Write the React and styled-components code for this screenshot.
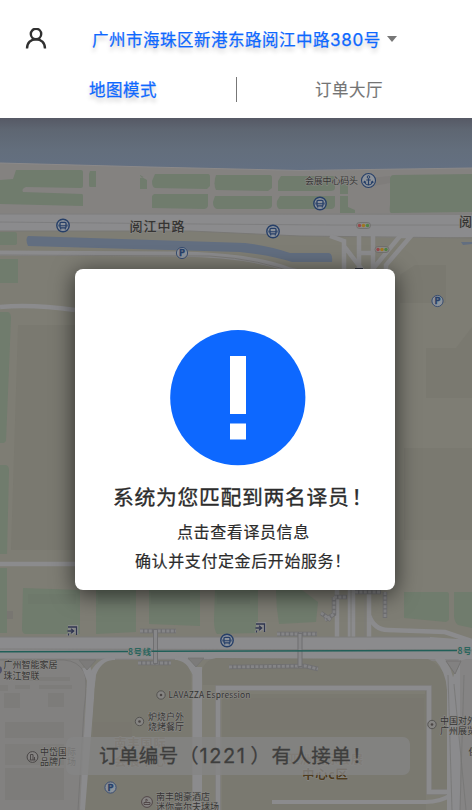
import React from "react";
import styled, { createGlobalStyle } from "styled-components";

const Global = createGlobalStyle`
  * { box-sizing: border-box; }
  body { margin: 0; background: #7e7d74; font-family: "Noto Sans CJK SC", "Noto Sans", sans-serif; }
`;

const Screen = styled.div`
  display: flex;
  flex-direction: column;
  width: 472px;
  height: 810px;
  overflow: hidden;
`;

const Header = styled.header`
  height: 118px;
  flex: none;
  background: #fff;
  display: flex;
  flex-direction: column;
`;

const AddressBar = styled.div`
  display: flex;
  align-items: center;
  height: 50px;
  margin-top: 14px;
  padding-left: 25px;
`;

const Address = styled.div`
  display: flex;
  align-items: center;
  margin-left: 45px;
  color: #0d68ff;
  font-size: 16.5px;
  line-height: 24px;
  letter-spacing: 0.5px;
  white-space: nowrap;
  -webkit-text-stroke: 0.25px currentColor;
  text-shadow: 0 4px 4px rgba(0, 0, 0, 0.22);
`;

const Digits = styled.span`
  font-family: Inter, "Liberation Sans", sans-serif;
  font-size: ${(p) => p.$size}px;
  letter-spacing: ${(p) => p.$gap}px;
`;

const Mark = styled.span`
  margin-left: ${(p) => p.$before || 0}px;
  margin-right: ${(p) => p.$after || 0}px;
`;

const Caret = styled.span`
  margin-left: 6px;
  border: 5px solid transparent;
  border-top: 6px solid #777;
  border-bottom: 0;
`;

const Tabs = styled.nav`
  display: grid;
  grid-template-columns: 236px 1px 1fr;
  align-items: center;
  height: 50px;
`;

const Tab = styled.span`
  justify-self: center;
  margin-left: ${(p) => p.$shift}px;
  font-size: 16.5px;
  line-height: 24px;
  letter-spacing: 0.5px;
  color: ${(p) => (p.$active ? "#0d68ff" : "#747474")};
  -webkit-text-stroke: ${(p) => (p.$active ? "0.25px" : "0.15px")} currentColor;
  text-shadow: ${(p) => (p.$active ? "0 4px 4px rgba(0, 0, 0, 0.22)" : "none")};
`;

const Divider = styled.span`
  height: 25px;
  background: #777;
`;

const Stage = styled.main`
  flex: 1;
  display: grid;
  grid-template: 692px / 472px;
  > * { grid-area: 1 / 1; }
`;

const MapSvg = styled.svg`
  display: block;
  width: 472px;
  height: 692px;
  font-family: "Noto Sans CJK SC", "Noto Sans", sans-serif;
`;

const Dialog = styled.section`
  z-index: 2;
  width: 320px;
  height: 321px;
  margin: 151px 0 0 75px;
  padding-top: 61px;
  border-radius: 8px;
  background: #fff;
  box-shadow: 0 4px 22px 1px rgba(0, 0, 0, 0.6);
  display: flex;
  flex-direction: column;
  color: #2c2c2c;
  white-space: nowrap;
`;

const AlertIcon = styled.svg`
  width: 136px;
  height: 136px;
  flex: none;
  margin-left: 95px;
`;

const Title = styled.h1`
  margin: 14px 0 0 38px;
  font-size: 20.8px;
  font-weight: 400;
  line-height: 32px;
  letter-spacing: 0.7px;
  -webkit-text-stroke: 0.35px currentColor;
`;

const Line = styled.p`
  margin: ${(p) => p.$top}px 0 0 ${(p) => p.$left}px;
  font-size: 16px;
  line-height: 24px;
  letter-spacing: 0.6px;
  -webkit-text-stroke: 0.2px currentColor;
`;

const Toast = styled.div`
  z-index: 1;
  width: 344px;
  height: 38px;
  margin: 619px 0 0 66px;
  padding-left: 33px;
  border-radius: 7px;
  background: rgba(133, 133, 132, 0.8);
  color: #3e3e3d;
  font-size: 19.5px;
  line-height: 36px;
  letter-spacing: 0.4px;
  white-space: nowrap;
  -webkit-text-stroke: 0.3px currentColor;
`;

const GREEN = "#707c6d";
const ROAD = "#8b8b8d";
const BLUE = "#263f68";

const Bus = ({ x, y }) => (
  <g transform={`translate(${x} ${y})`} fill="none" stroke={BLUE}>
    <circle r="6.2" fill="#8c929b" strokeWidth="1.4" />
    <rect x="-3" y="-3.2" width="6" height="5.6" rx="1" strokeWidth="1.3" />
    <path d="M-3 .3H3M-2.3 2.5V4M2.3 2.5V4M-4-1V1M4-1V1" strokeWidth="1.1" />
  </g>
);

const Parking = ({ x, y }) => (
  <g transform={`translate(${x} ${y})`}>
    <circle r="5.6" fill="#8c929b" stroke="#3a4e70" strokeWidth="1" />
    <text y="3.3" textAnchor="middle" fontSize="9" fontWeight="700" fill={BLUE} stroke={BLUE} strokeWidth=".4">P</text>
  </g>
);

const Signal = ({ x, y }) => (
  <g transform={`translate(${x} ${y})`}>
    <rect x="-7" y="-3" width="14" height="6" rx="3" fill="#8a8986" stroke="#686767" strokeWidth=".7" />
    <circle cx="-4" r="1.7" fill="#97494b" />
    <circle r="1.7" fill="#a07722" />
    <circle cx="4" r="1.7" fill="#4f8145" />
  </g>
);

const Exit = ({ x, y }) => (
  <g transform={`translate(${x} ${y})`} fill="none">
    <path d="M-4-3.5H4.5V4M-4 .5H1.5M-1-2L1.7.5L-1 3M-3.5 3V5" stroke="#8d8d8e" strokeWidth="3.4" />
    <path d="M-4-3.5H4.5V4.5M-4.5 .5H1.5M-1-1.7L1.7.5L-1 2.7M-3.5 3V5" stroke="#303650" strokeWidth="1.3" />
  </g>
);

const Spot = ({ x, y }) => (
  <g transform={`translate(${x} ${y})`}>
    <circle r="4.2" fill="#858482" stroke="#555452" strokeWidth="1" />
    <circle r="1.3" fill="#4b4645" />
  </g>
);

const Bridge = ({ d }) => (
  <g fill="none">
    <path d={d} stroke="#6f6f71" strokeWidth="4.4" />
    <path d={d} stroke="#858587" strokeWidth="2.8" strokeDasharray="3 1.4" />
  </g>
);

const Label = ({ x, y, size = 9, w, weight = 400, fill = "#363534", children }) => (
  <text x={x} y={y} fontSize={size} fontWeight={weight} textLength={w} fill={fill} stroke="#898885" strokeWidth="1.2" strokeLinejoin="round" paintOrder="stroke">
    {children}
  </text>
);

const CityMap = () => (
  <MapSvg viewBox="0 118 472 692">
    <defs>
      <linearGradient id="water" x1="0" x2="0" y1="0" y2="1">
        <stop offset="0" stopColor="#565965" />
        <stop offset=".22" stopColor="#5e6672" />
        <stop offset=".6" stopColor="#636e7c" />
        <stop offset="1" stopColor="#647082" />
      </linearGradient>
    </defs>
    <rect y="118" width="472" height="692" fill="#7e7d74" />

    <path d="M0 160H472V216H0Z" fill="#848280" />
    <path d="M0 118H472V168Q350 170 300 170.500L150 167L0 163Z" fill="url(#water)" />
    <path d="M0 163L150 167L300 170.500L472 168" fill="none" stroke="#8b8989" />

    <g fill={GREEN}>
      <path d="M0 180L13 179L16 170H81Q83 170 83 172V186Q83 188 81 188L26 187Q21 189 23 192L82 194Q83 194 83 196V206L0 204Z" />
      <path d="M90 171H96V187H90Q89 187 89 185V174Z" />
      <path d="M140 175L147 179V189H140Z" />
      <path d="M155 174H208Q210 174 210 177V186L207 189L155 188Q152 187 152 181Z" />
      <path d="M154 194H208V206Q207 209 204 209L152 208V196Z" />
      <path d="M216 175H270Q272 175 272 178V188L268 191L216 190Q213 184 216 175Z" />
      <path d="M215 196H272V206Q271 209 267 209H217Q213 208 213 202Z" />
      <path d="M281 176H333Q335 176 335 179V188Q335 191 330 191H278V181Z" />
      <path d="M280 196H335V206Q334 209 331 209H279Q276 207 277 201Z" />
      <path d="M340 182H348V194H340ZM340 196H348V207L355 210V213H340Z" />
      <path d="M394 175L472 174V212L391 213Q389 212 390 205V179Q390 175 394 175Z" />
      <path d="M0 232H15Q17 232 17 235V243Q17 245 14 245H0ZM0 259H18V283H0Z" />
    </g>
    <path d="M140 178L147 176V180L140 176" fill="#858381" />
    <path d="M370 178L390 176V183L368 187Z" fill="#7f7d7b" />

    <path d="M0 214L472 215V237L430 238L300 236L190 231L0 231Z" fill={ROAD} />
    <path d="M0 214H472M0 222L200 224L330 225L472 225" fill="none" stroke="#7e7e7f" />
    <path d="M0 231L190 231L300 236L472 238" fill="none" stroke="#797875" />
    <path d="M28 236L245 243Q270 246 290 253L329 253Q333 254 332 262H292Q270 255 240 252L28 246Q25 239 28 236Z" fill="#626e80" />
    <path d="M461 242H472V244L463 245Z" fill="#626e80" />
    <path d="M0 253L180 254Q250 255 290 270L360 285" fill="none" stroke={ROAD} strokeWidth="5" />
    <path d="M0 255L210 256Q260 259 300 275" fill="none" stroke="#7c7b79" />
    <path d="M330 236L344 241V280M359 236V280M373 236V280M344 246L370 280M372 270L400 236H411L386 265V280M359 253H372" fill="none" stroke={ROAD} strokeWidth="4.500" />
    <path d="M355 268H363V272H355Z" fill="#2f333d" />
    <path d="M415 265H446V303H400V275Z" fill="#7a7970" />

    <path d="M18 325H75V550H11Z" fill="#7a7970" />
    <path d="M426 348H456L472 327V398H426Z" fill="#7a7970" />
    <path d="M404 448H472V540H404Z" fill="#7a7970" />
    <path d="M0 307Q32 304 75 310" fill="none" stroke={ROAD} strokeWidth="4.500" />
    <path d="M0 564H75" fill="none" stroke={ROAD} strokeWidth="4.500" />
    <g fill={GREEN}>
      <path d="M0 312H8Q11 313 11 318L6 441L4 443H0Z" />
      <path d="M0 465H6Q9 466 9 470L7 554H0ZM0 568H7V633H0Z" />
      <path d="M23 588L80 590L80 634H25Q22 633 22 629Z" />
      <path d="M96 588H136V632L96 634Z" />
      <path d="M149 588H200V626L149 624Z" />
      <path d="M215 588H258V633L217 634Q214 630 214 620Z" />
      <path d="M276 590H302L318 602L316 622L279 624Q276 607 276 590Z" />
      <path d="M404 592H447Q449 592 449 595V620L446 622L404 618Z" />
      <path d="M454 592H472V628L458 625Q454 622 454 615Z" />
    </g>
    <path d="M28 594H76V604H28ZM98 592H130V604H98ZM151 592H190V604H151ZM217 592H250V604H217Z" fill="#697568" opacity=".3" />
    <path d="M7 611H13V619H7Z" fill="#787671" />

    <path d="M337 590V638M350 590V638M353 590V638M369 590V638M369 615Q374 630 388 630L445 632L472 641" fill="none" stroke={ROAD} strokeWidth="4.500" />
    <path d="M351 590V637M365 592V637" fill="none" stroke="#7d7c79" />
    <path d="M0 637H430L472 640V661L0 659Z" fill={ROAD} />
    <path d="M0 637H430M0 649L472 650M0 659L472 660" fill="none" stroke="#7d7c7b" />
    <path d="M0 660H80L86 672L82 810H0Z" fill="#828180" />
    <path d="M0 660H64Q78 661 84 672Q88 680 84 710L78 810" fill="none" stroke="#777675" />
    <path d="M90 690L94 673Q101 660 115 660M196 810L196 674Q191 660 175 660" fill="none" stroke={ROAD} strokeWidth="7" />
    <path d="M86 667L91 680L84 810" fill="none" stroke={ROAD} strokeWidth="8" />
    <path d="M198 667V810" fill="none" stroke={ROAD} strokeWidth="8" />
    <path d="M96 675Q101 661 113 660H177Q191 663 191 678L192 790L185 810H85Z" fill="#7a7970" />
    <path d="M202 671Q204 660 216 658L428 659Q445 667 447 685V795H425V690H222L221 685H203Z" fill="#7a7970" />
    <path d="M79 660H96L87 670ZM188 658H204L196 667Z" fill="#7c7b7a" stroke="#747372" strokeWidth=".8" />
    <path d="M218 810V688H429V792H447" fill="none" stroke="#7c7b79" strokeWidth="6" />
    <path d="M218 810V688H429V792H447" fill="none" stroke={ROAD} strokeWidth="4.500" />
    <path d="M222 694H426V810H222Z" fill="#7a7970" />
    <path d="M272 802H426Q440 802 451 795" fill="none" stroke={ROAD} strokeWidth="4" />
    <path d="M438 657Q450 670 451 690V810M463 659L457 678V810" fill="none" stroke={ROAD} strokeWidth="8" />
    <path d="M460 660H472V810H460Z" fill="#858484" />
    <path d="M446 661H461L455 674Z" fill="#828181" stroke="#747372" />
    <path d="M448 675L452 810M464 675L460 810M454 684L466 810" fill="none" stroke="#767675" strokeWidth=".8" />
    <path d="M4 693H20V708H4ZM48 693H64V707H48ZM5 722H64V738H5ZM5 768H64V800H5ZM0 685H8V691H0ZM15 685H30V689H15ZM39 685H72V689H39ZM20 677H70V681H20Z" fill="#7d7c7a" />
    <path d="M5 744H64V765H5Z" fill="#7e7d7b" />
    <path d="M93 722H132V756H93ZM93 760H184V775H93ZM230 698H424V730H230Z" fill="#77756d" opacity=".4" />

    <Bridge d="M140 631H176M138 663H171M277 634H317" />
    <Bridge d="M229 667L305 666L318 669M334 597H347M334 597V614L325 620M321 613L331 620M355 592H381M385 592V618" />
    <path d="M155.500 629V664M300 633V667" stroke="#6f6f71" strokeWidth="5" />
    <path d="M155.500 630V663M300 634V666" stroke="#878789" strokeWidth="3" />
    <path d="M0 651.700L128 651.500M151 651.300L457 650.500" stroke="#205f58" strokeWidth="1.500" />
    <Label x={128} y={654.500} size={8.500} w={23} weight={700} fill="#2c6660">8号线</Label>
    <Label x={457.500} y={653.500} size={8.500} w={23} weight={700} fill="#2c6660">8号线</Label>

    <Bus x={63} y={225.500} />
    <Bus x={320} y={203.500} />
    <Bus x={273} y={231.500} />
    <Bus x={227} y={640.500} />
    <Parking x={182} y={253} />
    <Parking x={437.500} y={301} />
    <Parking x={110.500} y={787.500} />
    <Signal x={363.500} y={225.500} />
    <Signal x={382} y={249.500} />
    <Exit x={72} y={630.500} />
    <Exit x={260} y={627.500} />
    <g transform="translate(368.500 180.500)" fill="none" stroke={BLUE}>
      <circle r="7" fill="#8d9299" strokeWidth="1.100" />
      <circle cy="-3.500" r="1.300" />
      <path d="M0-2V4.500M-2.200-.5H2.200M-4 1Q-3.500 4 0 4.500Q3.500 4 4 1M-4.800 2.300L-4 .8L-2.500 2M4.800 2.300L4 .8L2.500 2" strokeWidth="1.200" />
    </g>

    <Label x={305} y={183.500} size={9} w={53}>会展中心码头</Label>
    <Label x={129.500} y={230.500} size={13} w={55} weight={500}>阅江中路</Label>
    <Label x={459} y={226} size={13} weight={500}>阅江</Label>
    <circle cx="-2" cy="670" r="4" fill="#505269" />
    <Label x={3.500} y={668} w={54}>广州智能家居</Label>
    <Label x={3.500} y={679} w={36}>珠江智联</Label>
    <Spot x={161} y={695} />
    <Label x={168.500} y={698} size={8.500} w={82}>LAVAZZA Espression</Label>
    <Spot x={139.500} y={721.500} />
    <Label x={148} y={720} w={36}>炉烧户外</Label>
    <Label x={148} y={730} w={36}>烧烤餐厅</Label>
    <Spot x={432} y={724.500} />
    <Label x={440} y={723.500} w={45}>中国对外贸</Label>
    <Label x={440} y={733.500} w={45}>广州展览馆</Label>
    <Label x={468.500} y={755}>保</Label>
    <g transform="translate(32.500 757)" stroke="#4a4747" fill="none">
      <circle r="5.400" fill="#858382" />
      <path d="M-3 3H3M-2 3V-2.500H.5V3M2 3V0" />
    </g>
    <Label x={40} y={755} w={36}>中岱国际</Label>
    <Label x={40} y={765} w={36}>品牌广场</Label>
    <Label x={114} y={748} size={12.500} w={52} weight={700} fill="#685a43">南丰国际</Label>
    <Label x={114} y={766} size={12.500} w={52} weight={700} fill="#685a43">会展中心</Label>
    <Label x={287} y={764} size={12.500} w={76} weight={700} fill="#685a43">亚洲国际会展</Label>
    <Label x={302} y={779} size={12.500} w={46} weight={700} fill="#4d3b1d">中心c区</Label>
    <g transform="translate(147 802)" stroke="#524849" fill="none">
      <circle r="5.400" fill="#858382" />
      <path d="M-3 2.500H3V.5H-3ZM-1 .5V-3L1-1.500" />
    </g>
    <Label x={156} y={800} w={54}>南丰朗豪酒店</Label>
    <Label x={156} y={810} w={63}>迷你高尔夫球场</Label>
  </MapSvg>
);

export default function App() {
  return (
    <Screen>
      <Global />
      <Header>
        <AddressBar>
          <svg width="22" height="22" viewBox="0 0 22 22" fill="none" stroke="#303030" strokeWidth="2.400">
            <circle cx="11" cy="6" r="5.200" />
            <path d="M2 20.500C2 14.500 6 11.200 11 11.200S20 14.500 20 20.500" />
          </svg>
          <Address>
            <span>广州市海珠区新港东路阅江中路<Digits $size={17} $gap={0.7}>380</Digits>号</span>
            <Caret />
          </Address>
        </AddressBar>
        <Tabs>
          <Tab $active $shift={10}>地图模式</Tab>
          <Divider />
          <Tab $shift={-11}>订单大厅</Tab>
        </Tabs>
      </Header>
      <Stage>
        <CityMap />
        <Toast>
          订单编号<Mark $before={0.5} $after={0.5}>（</Mark>
          <Digits $size={20} $gap={1.6}>1221</Digits>
          <Mark $before={4} $after={1}>）</Mark>有人接单<Mark $before={1}>！</Mark>
        </Toast>
        <Dialog>
          <AlertIcon viewBox="0 0 136 136">
            <circle cx="67.800" cy="67.700" r="67.600" fill="#0d68ff" />
            <path d="M60 26H76V84H60ZM60 93.500H76V109.500H60Z" fill="#fff" />
          </AlertIcon>
          <Title>系统为您匹配到两名译员<Mark $before={2}>！</Mark></Title>
          <Line $top={7} $left={102}>点击查看译员信息</Line>
          <Line $top={5} $left={60}>确认并支付定金后开始服务！</Line>
        </Dialog>
      </Stage>
    </Screen>
  );
}
